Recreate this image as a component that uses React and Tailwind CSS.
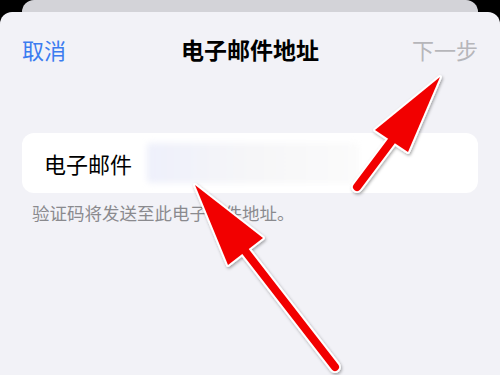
import React from 'react';

const Arrow = ({ tip, left, right, tail }) => {
  const head = `${tip.join(',')} ${left.join(',')} ${right.join(',')}`;
  const mid = [(left[0] + right[0]) / 2, (left[1] + right[1]) / 2];
  return (
    <g>
      <g filter="url(#sh)">
        <line x1={mid[0]} y1={mid[1]} x2={tail[0]} y2={tail[1]} stroke="#fff" strokeWidth="12" strokeLinecap="round" />
        <polygon points={head} fill="#fff" stroke="#fff" strokeWidth="4" strokeLinejoin="round" />
      </g>
      <line x1={mid[0]} y1={mid[1]} x2={tail[0]} y2={tail[1]} stroke="#f20000" strokeWidth="8" strokeLinecap="round" />
      <polygon points={head} fill="#f20000" />
    </g>
  );
};

export default function App() {
  return (
    <div className="relative w-[500px] h-[375px] overflow-hidden bg-black font-['Noto_Sans_CJK_SC',sans-serif]">
      <div className="mx-[22px] h-[30px] rounded-t-[12px] bg-[#d3d3d8]" />
      <div className="absolute left-0 right-0 top-[12px] bottom-0 rounded-t-[12px] bg-[#f2f2f7]">
        <div className="grid h-[74px] grid-cols-[1fr_auto_1fr] items-center px-[22px]">
          <span className="text-[22px] text-[#3b7cf0]">取消</span>
          <span className="text-[23px] font-bold text-black">电子邮件地址</span>
          <span className="justify-self-end text-[22px] text-[#b6b6ba]">下一步</span>
        </div>
        <div className="mx-[22px] mt-[47px] flex h-[60px] items-center rounded-[12px] bg-white pl-[22px]">
          <span className="text-[22px] text-black">电子邮件</span>
          <div className="ml-[15px] h-[40px] w-[212px] rounded-[4px] bg-gradient-to-r from-[#eef0fb] via-[#f6f6f8] to-[#fbfbfb] blur-[3px]" />
        </div>
        <p className="mt-[7px] pl-[32px] text-[17.5px] text-[#8a8a8e]">验证码将发送至此电子邮件地址。</p>
      </div>
      <svg className="absolute inset-0" width="500" height="375" viewBox="0 0 500 375">
        <defs>
          <filter id="sh" x="-20%" y="-20%" width="140%" height="140%">
            <feDropShadow dx="1" dy="1.5" stdDeviation="1.5" floodColor="#000" floodOpacity="0.35" />
          </filter>
        </defs>
        <Arrow tip={[440, 77]} left={[375, 130]} right={[408, 152]} tail={[357, 187]} />
        <Arrow tip={[195, 185]} left={[228, 265]} right={[263, 238]} tail={[335, 367]} />
      </svg>
    </div>
  );
}
